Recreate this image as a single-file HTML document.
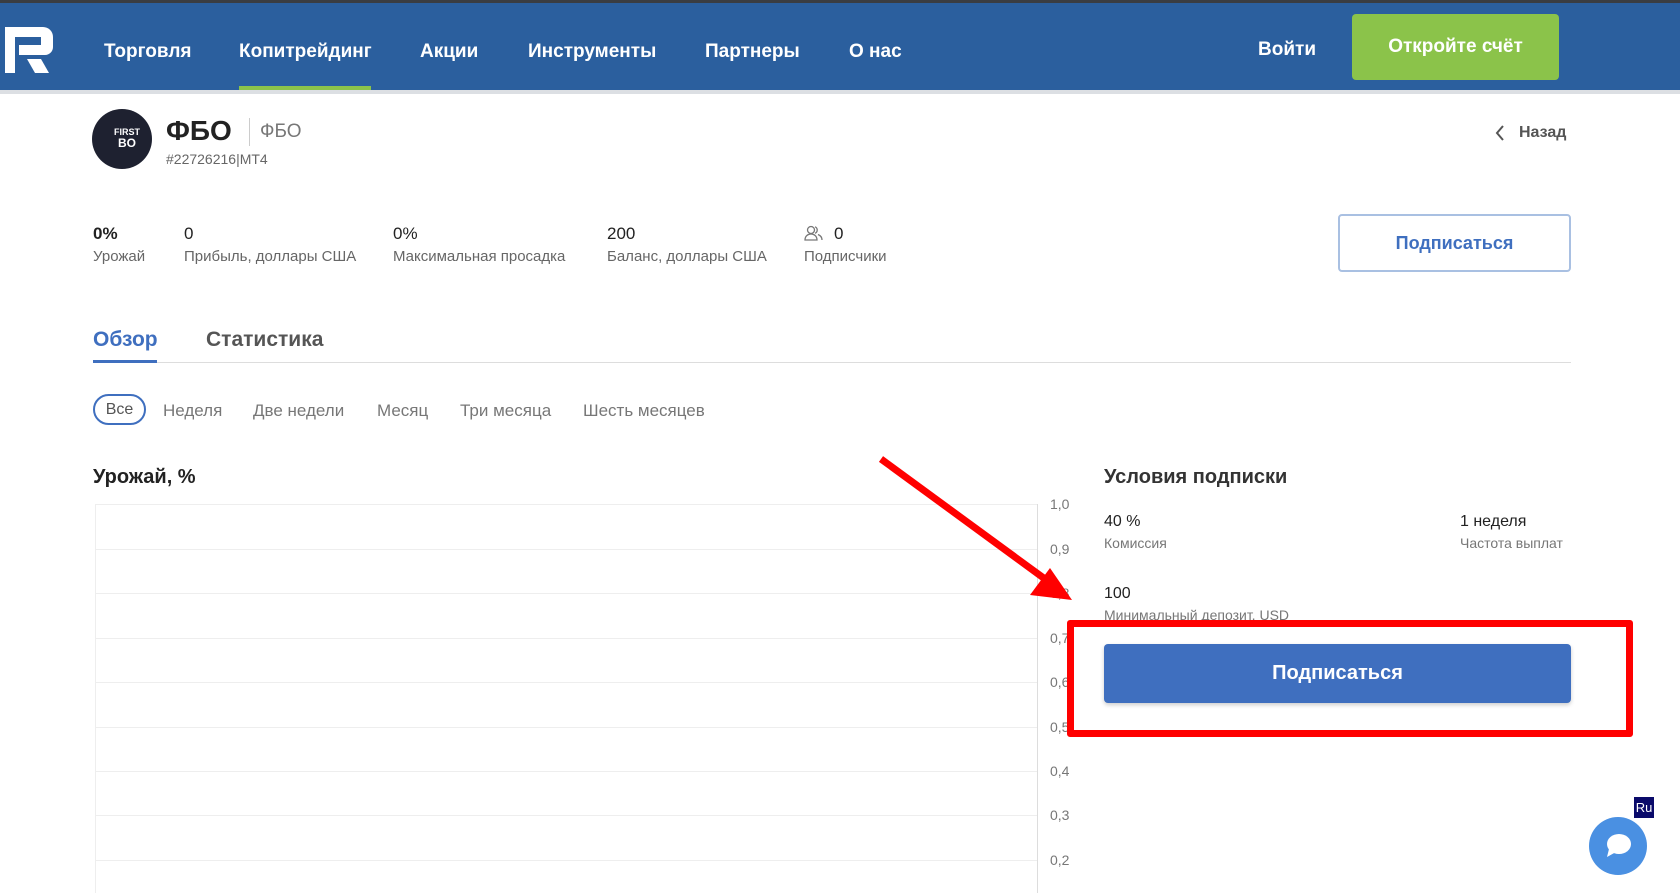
<!DOCTYPE html>
<html><head><meta charset="utf-8"><style>
*{margin:0;padding:0;box-sizing:border-box}
body{width:1680px;height:893px;overflow:hidden;background:#fff;font-family:"Liberation Sans",sans-serif;position:relative;color:#222}
.a{position:absolute;white-space:nowrap}
.nav{position:absolute;left:0;top:0;width:1680px;height:90px;background:#2b5f9e;border-top:3px solid #3a3d42}
.gl{position:absolute;left:0;top:90px;width:1680px;height:4px;background:#dcdfe3}
.ni{position:absolute;top:41px;color:#fff;font-weight:bold;font-size:19px}
.sv{position:absolute;top:224px;font-size:17px;color:#222}
.sl{position:absolute;top:248px;font-size:15px;color:#666}
.f{position:absolute;top:401px;font-size:17px;color:#777}
.yl{position:absolute;left:1050px;font-size:14px;color:#777}
.hl{position:absolute;left:95px;width:942px;height:1px;background:#eee}
</style></head><body>
<div class="nav"></div><div class="gl"></div>
<svg class="a" style="left:5px;top:27px" width="50" height="46" viewBox="0 0 50 46"><path d="M0 0H38a10 10 0 0 1 10 10V20a8 8 0 0 1-8 8H14V18H36V10H10V46H0Z" fill="#fff"/><path d="M22 32H36L44 46H30Z" fill="#fff"/></svg>
<div class="ni" style="left:104px">Торговля</div>
<div class="ni" style="left:239px">Копитрейдинг</div>
<div class="a" style="left:239px;top:86px;width:132px;height:4px;background:#8bc34a"></div>
<div class="ni" style="left:420px">Акции</div>
<div class="ni" style="left:528px">Инструменты</div>
<div class="ni" style="left:705px">Партнеры</div>
<div class="ni" style="left:849px">О нас</div>
<div class="ni" style="left:1258px;top:39px">Войти</div>
<div class="a" style="left:1352px;top:14px;width:207px;height:66px;background:#8bc34a;border-radius:4px;color:#fff;font-weight:bold;font-size:19px;text-align:center;line-height:66px">Откройте счёт</div>

<div class="a" style="left:92px;top:109px;width:60px;height:60px;border-radius:50%;background:#1e2130;color:#fff;font-size:9px;font-weight:bold;text-align:center;padding-top:18px;line-height:11px">&nbsp;&nbsp;&nbsp;&nbsp;FIRST<br>&nbsp;&nbsp;&nbsp;&nbsp;<span style="font-size:12px">BO</span></div>
<div class="a" style="left:166px;top:115px;font-size:28px;font-weight:bold">ФБО</div>
<div class="a" style="left:249px;top:118px;width:1px;height:28px;background:#ccc"></div>
<div class="a" style="left:260px;top:121px;font-size:19px;color:#777">ФБО</div>
<div class="a" style="left:166px;top:151px;font-size:14px;color:#666">#22726216|MT4</div>
<svg class="a" style="left:1494px;top:124px" width="12" height="18" viewBox="0 0 12 18"><path d="M9 2L3 9L9 16" fill="none" stroke="#555" stroke-width="2"/></svg>
<div class="a" style="left:1519px;top:124px;font-size:16px;font-weight:bold;color:#555">Назад</div>

<div class="sv" style="left:93px;font-weight:bold">0%</div><div class="sl" style="left:93px">Урожай</div>
<div class="sv" style="left:184px">0</div><div class="sl" style="left:184px">Прибыль, доллары США</div>
<div class="sv" style="left:393px">0%</div><div class="sl" style="left:393px">Максимальная просадка</div>
<div class="sv" style="left:607px">200</div><div class="sl" style="left:607px">Баланс, доллары США</div>
<svg class="a" style="left:804px;top:225px" width="20" height="16" viewBox="0 0 20 16" fill="none" stroke="#777" stroke-width="1.3"><circle cx="7" cy="5" r="3.5"/><path d="M1 15c0-4 3-6 6-6s6 2 6 6z"/><path d="M11 1.8a3.5 3.5 0 0 1 0 6.5M14 9.5c2 .8 4 2.5 4 5.5"/></svg>
<div class="sv" style="left:834px">0</div><div class="sl" style="left:804px">Подписчики</div>
<div class="a" style="left:1338px;top:214px;width:233px;height:58px;border:2px solid #a9c0e2;border-radius:4px;color:#3f6fbf;font-weight:bold;font-size:18px;text-align:center;line-height:54px">Подписаться</div>

<div class="a" style="left:93px;top:328px;font-size:21px;color:#3f6fbf;font-weight:bold">Обзор</div>
<div class="a" style="left:206px;top:328px;font-size:21px;color:#555;font-weight:bold">Статистика</div>
<div class="a" style="left:93px;top:362px;width:1478px;height:1px;background:#ddd"></div>
<div class="a" style="left:93px;top:360px;width:64px;height:3px;background:#3f6fbf"></div>

<div class="a" style="left:93px;top:394px;width:53px;height:31px;border:2px solid #3f6fbf;border-radius:16px;color:#555;font-size:16px;text-align:center;line-height:27px">Все</div>
<div class="f" style="left:163px">Неделя</div>
<div class="f" style="left:253px">Две недели</div>
<div class="f" style="left:377px">Месяц</div>
<div class="f" style="left:460px">Три месяца</div>
<div class="f" style="left:583px">Шесть месяцев</div>

<div class="a" style="left:93px;top:466px;font-size:20px;font-weight:bold">Урожай, %</div>
<div class="a" style="left:95px;top:504px;width:1px;height:389px;background:#eee"></div>
<div class="a" style="left:1037px;top:504px;width:1px;height:389px;background:#ddd"></div>
<div class="hl" style="top:504px"></div><div class="hl" style="top:549px"></div><div class="hl" style="top:593px"></div><div class="hl" style="top:638px"></div><div class="hl" style="top:682px"></div><div class="hl" style="top:727px"></div><div class="hl" style="top:771px"></div><div class="hl" style="top:815px"></div><div class="hl" style="top:860px"></div>
<div class="yl" style="top:496px">1,0</div><div class="yl" style="top:541px">0,9</div><div class="yl" style="top:585px">0,8</div><div class="yl" style="top:630px">0,7</div><div class="yl" style="top:674px">0,6</div><div class="yl" style="top:719px">0,5</div><div class="yl" style="top:763px">0,4</div><div class="yl" style="top:807px">0,3</div><div class="yl" style="top:852px">0,2</div>

<div class="a" style="left:1104px;top:466px;font-size:20px;font-weight:bold;color:#333">Условия подписки</div>
<div class="a" style="left:1104px;top:513px;font-size:16px">40 %</div>
<div class="a" style="left:1104px;top:535px;font-size:14px;color:#777">Комиссия</div>
<div class="a" style="left:1460px;top:513px;font-size:16px">1 неделя</div>
<div class="a" style="left:1460px;top:535px;font-size:14px;color:#777">Частота выплат</div>
<div class="a" style="left:1104px;top:585px;font-size:16px">100</div>
<div class="a" style="left:1104px;top:607px;font-size:14px;color:#777">Минимальный депозит, USD</div>
<div class="a" style="left:1067px;top:620px;width:566px;height:117px;border:7px solid #f00;border-radius:3px"></div>
<div class="a" style="left:1104px;top:644px;width:467px;height:59px;background:#3f6fbf;border-radius:4px;box-shadow:0 2px 4px rgba(0,0,0,.2);color:#fff;font-weight:bold;font-size:20px;text-align:center;line-height:59px">Подписаться</div>

<svg class="a" style="left:0;top:0" width="1680" height="893"><line x1="881" y1="459" x2="1045" y2="579" stroke="#f00" stroke-width="7"/><polygon points="1072,600 1030,595 1050,568" fill="#f00"/></svg>

<div class="a" style="left:1634px;top:797px;width:20px;height:21px;background:#0a0a6a;color:#fff;font-size:13px;text-align:center;line-height:21px">Ru</div>
<div class="a" style="left:1589px;top:817px;width:58px;height:58px;border-radius:50%;background:#4a90e2"></div>
<svg class="a" style="left:1604px;top:833px" width="28" height="26" viewBox="0 0 28 26"><ellipse cx="15" cy="11" rx="12" ry="10" fill="#fff"/><path d="M5 16L3 24L12 19Z" fill="#fff"/></svg>
</body></html>
